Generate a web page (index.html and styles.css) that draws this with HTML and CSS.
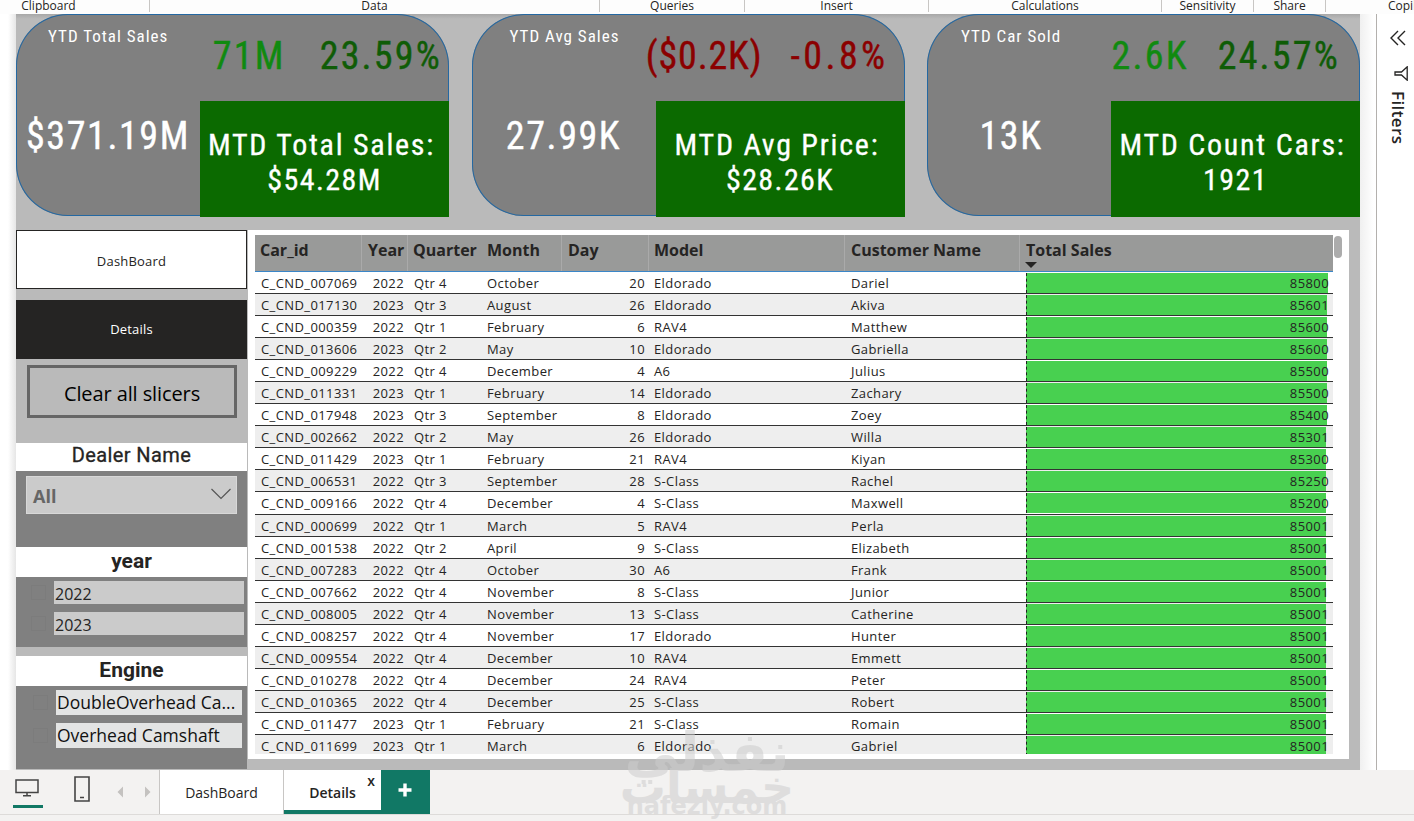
FILE: index.html
```html
<!DOCTYPE html>
<html lang="en">
<head>
    <meta charset="UTF-8">
    <meta name="viewport" content="width=device-width, initial-scale=1.0">
    <title>Car Sales Report</title>
    <link rel="stylesheet" href="styles.css">
</head>
<body>

    <header class="ribbon">
        <div class="group clipboard">Clipboard</div>
        <div class="group data">Data</div>
        <div class="group queries">Queries</div>
        <div class="group insert">Insert</div>
        <div class="group calculations">Calculations</div>
        <div class="group sensitivity">Sensitivity</div>
        <div class="group share">Share</div>
        <div class="group copilot">Copilot</div>
    </header>

    <div class="workspace">
        <main class="canvas">
            <section class="cards">
                <div class="card total">
                    <div class="card-label">YTD Total Sales</div>
                    <div class="card-change"><span class="up">71M</span><span class="up-dark">23.59%</span></div>
                    <div class="card-value">$371.19M</div>
                    <div class="card-mtd"><span class="mtd-name">MTD Total Sales:</span><span>$54.28M</span></div>
                </div>
                <div class="card average">
                    <div class="card-label">YTD Avg Sales</div>
                    <div class="card-change"><span class="down">($0.2K)</span><span class="down wide">-0.8%</span></div>
                    <div class="card-value">27.99K</div>
                    <div class="card-mtd"><span class="mtd-name">MTD Avg Price:</span><span>$28.26K</span></div>
                </div>
                <div class="card sold">
                    <div class="card-label">YTD Car Sold</div>
                    <div class="card-change"><span class="up">2.6K</span><span class="up-dark">24.57%</span></div>
                    <div class="card-value">13K</div>
                    <div class="card-mtd"><span class="mtd-name">MTD Count Cars:</span><span>1921</span></div>
                </div>
            </section>

            <div class="report">
                <aside class="sidebar">
                    <div class="nav-button">DashBoard</div>
                    <div class="nav-button active">Details</div>
                    <div class="clear-button">Clear all slicers</div>

                    <div class="slicer dealer">
                        <div class="slicer-title">Dealer Name</div>
                        <div class="dropdown">
                            <span>All</span>
                            <svg width="20" height="12" viewBox="0 0 20 12"><path d="M0.5 1 L10 10.5 L19.5 1" fill="none" stroke="#555" stroke-width="1.2"/></svg>
                        </div>
                    </div>

                    <div class="slicer year">
                        <div class="slicer-title">year</div>
                        <div class="option"><i class="check"></i><span>2022</span></div>
                        <div class="option"><i class="check"></i><span>2023</span></div>
                    </div>

                    <div class="slicer engine">
                        <div class="slicer-title">Engine</div>
                        <div class="option"><i class="check"></i><span>DoubleOverhead Ca...</span></div>
                        <div class="option"><i class="check"></i><span>Overhead Camshaft</span></div>
                    </div>
                </aside>

                <section class="table-card">
                    <div class="table">
                        <div class="row head"><div>Car_id</div><div>Year</div><div>Quarter</div><div>Month</div><div>Day</div><div>Model</div><div>Customer Name</div><div>Total Sales</div></div>
                        <div class="row"><div>C_CND_007069</div><div>2022</div><div>Qtr 4</div><div>October</div><div>20</div><div>Eldorado</div><div>Dariel</div><div><b style="width: 302px"></b>85800</div></div>
                        <div class="row"><div>C_CND_017130</div><div>2023</div><div>Qtr 3</div><div>August</div><div>26</div><div>Eldorado</div><div>Akiva</div><div><b style="width: 301px"></b>85601</div></div>
                        <div class="row"><div>C_CND_000359</div><div>2022</div><div>Qtr 1</div><div>February</div><div>6</div><div>RAV4</div><div>Matthew</div><div><b style="width: 301px"></b>85600</div></div>
                        <div class="row"><div>C_CND_013606</div><div>2023</div><div>Qtr 2</div><div>May</div><div>10</div><div>Eldorado</div><div>Gabriella</div><div><b style="width: 301px"></b>85600</div></div>
                        <div class="row"><div>C_CND_009229</div><div>2022</div><div>Qtr 4</div><div>December</div><div>4</div><div>A6</div><div>Julius</div><div><b style="width: 301px"></b>85500</div></div>
                        <div class="row"><div>C_CND_011331</div><div>2023</div><div>Qtr 1</div><div>February</div><div>14</div><div>Eldorado</div><div>Zachary</div><div><b style="width: 301px"></b>85500</div></div>
                        <div class="row"><div>C_CND_017948</div><div>2023</div><div>Qtr 3</div><div>September</div><div>8</div><div>Eldorado</div><div>Zoey</div><div><b style="width: 301px"></b>85400</div></div>
                        <div class="row"><div>C_CND_002662</div><div>2022</div><div>Qtr 2</div><div>May</div><div>26</div><div>Eldorado</div><div>Willa</div><div><b style="width: 300px"></b>85301</div></div>
                        <div class="row"><div>C_CND_011429</div><div>2023</div><div>Qtr 1</div><div>February</div><div>21</div><div>RAV4</div><div>Kiyan</div><div><b style="width: 300px"></b>85300</div></div>
                        <div class="row"><div>C_CND_006531</div><div>2022</div><div>Qtr 3</div><div>September</div><div>28</div><div>S-Class</div><div>Rachel</div><div><b style="width: 300px"></b>85250</div></div>
                        <div class="row"><div>C_CND_009166</div><div>2022</div><div>Qtr 4</div><div>December</div><div>4</div><div>S-Class</div><div>Maxwell</div><div><b style="width: 300px"></b>85200</div></div>
                        <div class="row"><div>C_CND_000699</div><div>2022</div><div>Qtr 1</div><div>March</div><div>5</div><div>RAV4</div><div>Perla</div><div><b style="width: 300px"></b>85001</div></div>
                        <div class="row"><div>C_CND_001538</div><div>2022</div><div>Qtr 2</div><div>April</div><div>9</div><div>S-Class</div><div>Elizabeth</div><div><b style="width: 300px"></b>85001</div></div>
                        <div class="row"><div>C_CND_007283</div><div>2022</div><div>Qtr 4</div><div>October</div><div>30</div><div>A6</div><div>Frank</div><div><b style="width: 300px"></b>85001</div></div>
                        <div class="row"><div>C_CND_007662</div><div>2022</div><div>Qtr 4</div><div>November</div><div>8</div><div>S-Class</div><div>Junior</div><div><b style="width: 300px"></b>85001</div></div>
                        <div class="row"><div>C_CND_008005</div><div>2022</div><div>Qtr 4</div><div>November</div><div>13</div><div>S-Class</div><div>Catherine</div><div><b style="width: 300px"></b>85001</div></div>
                        <div class="row"><div>C_CND_008257</div><div>2022</div><div>Qtr 4</div><div>November</div><div>17</div><div>Eldorado</div><div>Hunter</div><div><b style="width: 300px"></b>85001</div></div>
                        <div class="row"><div>C_CND_009554</div><div>2022</div><div>Qtr 4</div><div>December</div><div>10</div><div>RAV4</div><div>Emmett</div><div><b style="width: 300px"></b>85001</div></div>
                        <div class="row"><div>C_CND_010278</div><div>2022</div><div>Qtr 4</div><div>December</div><div>24</div><div>RAV4</div><div>Peter</div><div><b style="width: 300px"></b>85001</div></div>
                        <div class="row"><div>C_CND_010365</div><div>2022</div><div>Qtr 4</div><div>December</div><div>25</div><div>S-Class</div><div>Robert</div><div><b style="width: 300px"></b>85001</div></div>
                        <div class="row"><div>C_CND_011477</div><div>2023</div><div>Qtr 1</div><div>February</div><div>21</div><div>S-Class</div><div>Romain</div><div><b style="width: 300px"></b>85001</div></div>
                        <div class="row"><div>C_CND_011699</div><div>2023</div><div>Qtr 1</div><div>March</div><div>6</div><div>Eldorado</div><div>Gabriel</div><div><b style="width: 300px"></b>85001</div></div>
                    </div>
                    <div class="scroll-thumb"></div>
                </section>
            </div>
        </main>

        <aside class="filters">
            <svg width="16" height="16" viewBox="0 0 16 16"><path d="M8 1 L1 8 L8 15 M15 1 L8 8 L15 15" fill="none" stroke="#252423" stroke-width="1.4"/></svg>
            <svg class="funnel" width="14" height="15" viewBox="0 0 14 15"><path d="M13.2 0.8 V14.2 L7.5 9 H1 V6 H7.5 Z" fill="none" stroke="#252423" stroke-width="1.3"/></svg>
            <span class="filters-title">Filters</span>
        </aside>
    </div>

    <footer class="page-bar">
        <div class="views">
            <div class="view selected">
                <svg width="24" height="18" viewBox="0 0 24 18"><path d="M1 1 H23 V13.5 H1 Z M12 13.5 V16.5 M8 16.8 H16" fill="none" stroke="#444" stroke-width="1.5"/></svg>
            </div>
            <svg class="phone" width="16" height="26" viewBox="0 0 16 26"><path d="M1 1 H15 V25 H1 Z M6 21.5 H10" fill="none" stroke="#444" stroke-width="1.6"/></svg>
            <svg class="arrows" width="34" height="12" viewBox="0 0 34 12"><path d="M6 0.5 V11.5 L0.5 6 Z M28 0.5 V11.5 L33.5 6 Z" fill="#c4c2c0"/></svg>
        </div>
        <div class="tab">DashBoard</div>
        <div class="tab current">Details<span class="close">x</span></div>
        <div class="add">
            <svg width="14" height="14" viewBox="0 0 14 14"><path d="M7 0.5 V13.5 M0.5 7 H13.5" stroke="#fff" stroke-width="3.4"/></svg>
        </div>
    </footer>

    <div class="watermark">
        <span class="mark-top">نفذلي</span>
        <span class="mark-mid">خمسات</span>
        <span class="mark-url">nafezly.com</span>
    </div>

</body>
</html>
```
FILE: styles.css
```css
* {
    box-sizing: border-box;
}

body {
    margin: 0;
    width: 1414px;
    height: 821px;
    overflow: hidden;
    position: relative;
    background: #f3f2f1;
    color: #252423;
    font-family: "Open Sans", "Noto Sans", sans-serif;
}

svg {
    display: block;
}

.ribbon {
    display: flex;
    height: 14px;
    background: #fdfdfd;
    font-size: 12px;
    white-space: nowrap;
}

.group {
    height: 12px;
    flex: none;
    border-right: 1px solid #c8c6c4;
    text-align: center;
    line-height: 12px;
}

.clipboard { width: 150px; padding-right: 52px; }
.data { width: 450px; }
.queries { width: 145px; }
.insert { width: 184px; }
.calculations { width: 233px; }
.sensitivity { width: 92px; }
.share { width: 72px; }
.copilot { width: 150px; padding-left: 62px; text-align: left; }

.workspace {
    display: flex;
    height: 756px;
    background: linear-gradient(90deg, #fff 0, #fff 8px, #e6e6e6 16px, #f0f0f0 1360px, #fff 1374px);
}

.canvas {
    width: 1344px;
    margin-left: 16px;
    background: linear-gradient(#a8a8a8, #bababa 5px);
}

/* KPI cards */
.cards {
    display: grid;
    grid-template-columns: repeat(3, 433px);
    justify-content: space-between;
}

.card {
    display: grid;
    grid-template-columns: 184px 249px;
    grid-template-rows: 87px 115px;
    background: #808080;
    border-radius: 52px;
    box-shadow: inset 0 0 0 1px #2468a2;
    height: 202px;
    font-family: Roboto, sans-serif;
    font-stretch: 75%;
    color: #fff;
    white-space: nowrap;
}

.card-label {
    padding: 11px 0 0 32px;
    font-size: 17px;
    line-height: 22px;
    letter-spacing: 1px;
}

.card-change {
    display: flex;
    justify-content: flex-end;
    gap: 34px;
    padding: 18px 7px 0 0;
    font-size: 38px;
    line-height: 49px;
    letter-spacing: 2.2px;
    -webkit-text-stroke: 0.4px;
}

.card-value {
    text-align: center;
    font-size: 38px;
    line-height: 70px;
    letter-spacing: 1.6px;
    -webkit-text-stroke: 0.4px;
}

.card-mtd {
    display: flex;
    flex-direction: column;
    align-items: center;
    height: 116px;
    padding-top: 26px;
    background: #0b6a00;
    font-size: 30px;
    line-height: 35px;
    letter-spacing: 1.4px;
    -webkit-text-stroke: 0.3px;
}

.mtd-name {
    padding-right: 6px;
    letter-spacing: 1.75px;
}

.average .card-label { padding-left: 38px; }
.average .card-change { padding-right: 16px; gap: 28px; letter-spacing: 0.8px; }
.average .wide { letter-spacing: 3.4px; }
.sold .card-label { padding-left: 34px; }
.sold .card-change { padding-right: 20px; gap: 29px; }
.sold .card-value { padding-right: 16px; }

.up { color: #108a10; }
.up-dark { color: #0f5c06; }
.down { color: #8b0000; }

.report {
    display: flex;
    padding-top: 14px;
}

/* left column */
.sidebar {
    width: 231px;
    margin-right: 1px;
}

.nav-button {
    height: 59px;
    margin-bottom: 11px;
    border: 1px solid #252423;
    background: #fff;
    font-size: 13px;
    line-height: 60px;
    letter-spacing: 0.2px;
    text-align: center;
}

.nav-button.active {
    background: #252423;
    color: #fff;
    margin-bottom: 6px;
    line-height: 57px;
}

.clear-button {
    width: 210px;
    height: 53px;
    margin: 0 0 25px 11px;
    border: 3px solid #666;
    color: #000;
    font-size: 20px;
    line-height: 51px;
    letter-spacing: -0.1px;
    text-align: center;
}

.slicer {
    background: #808080;
}

.slicer-title {
    height: 30px;
    background: #fff;
    font-family: Roboto, sans-serif;
    font-size: 21px;
    font-weight: bold;
    line-height: 29px;
    text-align: center;
}

.dealer { height: 104px; }

.dealer .slicer-title {
    height: 28px;
    font-size: 20px;
    font-weight: 400;
    line-height: 24px;
    letter-spacing: 0.4px;
    -webkit-text-stroke: 0.3px;
}

.dropdown {
    display: flex;
    justify-content: space-between;
    align-items: center;
    width: 211px;
    height: 38px;
    margin: 5px 0 0 10px;
    padding: 0 5px 3px 6px;
    background: #cbcbcb;
    border: 1px solid #d8d8d8;
    color: #666;
    font-size: 18px;
    font-weight: bold;
}

.dropdown span { padding-top: 4px; }

.year { height: 100px; margin-bottom: 9px; }
.engine { height: 113px; }

.option {
    display: flex;
    align-items: center;
    margin: 4px 3px 8px 0;
}

.option span {
    flex: 1;
    height: 23px;
    padding-left: 1px;
    background: #cbcbcb;
    font-size: 16px;
    line-height: 26px;
    white-space: nowrap;
}

.check {
    width: 15px;
    height: 15px;
    margin: 0 8px 0 15px;
    border: 1px solid #7c7c7c;
}

.engine .option { margin: 4px 5px 8px 2px; }

.engine .option span {
    height: 25px;
    background: #e3e4e4;
    color: #111;
    font-size: 17.5px;
    line-height: 25px;
}

/* details table */
.table-card {
    display: flex;
    width: 1101px;
    height: 529px;
    padding: 5px 0 0 7px;
    background: #fff;
}

.table {
    width: 1078px;
    height: 519px;
    overflow: hidden;
}

.row {
    display: grid;
    grid-template-columns: 107px 46px 74px 80px 87px 196px 175px 313px;
    height: 22.06px;
    border-bottom: 1px solid #333;
    font-size: 13px;
    line-height: 22px;
    letter-spacing: 0.4px;
    white-space: nowrap;
}

.row div {
    padding: 0 5px;
}

.row:nth-child(odd) { background: #eee; }

.row div:nth-child(1),
.row div:nth-child(3),
.row div:nth-child(7) { padding-left: 6px; }

.row div:nth-child(2),
.row div:nth-child(5),
.row div:nth-child(8) {
    padding-right: 4px;
    text-align: right;
}

.row div:nth-child(8) {
    position: relative;
    z-index: 0;
}

/* data bar behind the value */
.row b {
    position: absolute;
    z-index: -1;
    top: 1px;
    bottom: 1px;
    left: 6px;
    background: #48d050;
    border-left: 1px dashed #222;
}

.row.head {
    height: 37px;
    background: #999a99;
    border-bottom: 1px solid #3a86c8;
    font-size: 16px;
    font-weight: bold;
    line-height: 31px;
    letter-spacing: 0;
}

.row.head div {
    text-align: left;
    border-right: 1px solid #aaa;
}

.row.head div:nth-child(1) { padding-left: 5px; }
.row.head div:nth-child(2),
.row.head div:nth-child(5),
.row.head div:nth-child(8) { padding-left: 6px; }

.row.head div:nth-child(3) { padding-left: 5px; }

.row.head div:nth-child(3),
.row.head div:nth-child(8) { border-right: none; }

.row.head div:nth-child(8)::after {
    content: "";
    position: absolute;
    left: 5px;
    bottom: 3px;
    border: 6px solid transparent;
    border-top-color: #252423;
    border-bottom: none;
}

.scroll-thumb {
    width: 8px;
    height: 22px;
    margin: 1px 0 0 1px;
    border-radius: 4px;
    background: #acacac;
}

/* collapsed filter pane */
.filters {
    display: flex;
    flex-direction: column;
    align-items: center;
    width: 38px;
    margin-left: 16px;
    padding-top: 16px;
    padding-left: 5px;
    border-left: 1px solid #b3b0ad;
    background: #fff;
}

.funnel { margin: 20px 0 10px 5px; }

.filters-title {
    writing-mode: vertical-rl;
    font-size: 17px;
    font-weight: 600;
    line-height: 20px;
    letter-spacing: 0.4px;
}

/* page tabs */
.page-bar {
    display: flex;
    height: 45px;
    border-bottom: 1px solid #dddbd9;
}

.views {
    display: flex;
    width: 160px;
    padding-left: 13px;
    border-right: 1px solid #c8c6c4;
}

.view.selected {
    width: 30px;
    height: 38px;
    padding: 9px 0 0 2px;
    border-bottom: 3px solid #117865;
}

.phone { margin: 6px 0 0 31px; }
.arrows { margin: 16px 0 0 27px; flex: none; }

.tab {
    width: 124px;
    background: #fff;
    border-right: 1px solid #c8c6c4;
    font-size: 14px;
    line-height: 45px;
    text-align: center;
}

.tab.current {
    position: relative;
    width: 97px;
    border-right: none;
    border-bottom: 4px solid #117865;
    font-weight: 600;
}

.close {
    position: absolute;
    top: 2px;
    right: 6px;
    font-size: 14px;
    line-height: 18px;
}

.add {
    display: flex;
    align-items: center;
    justify-content: center;
    width: 49px;
    padding: 0 1px 4px 0;
    background: #117865;
}

.watermark {
    position: absolute;
    left: 612px;
    top: 732px;
    width: 190px;
    height: 89px;
    display: flex;
    flex-direction: column;
    align-items: center;
    color: #cdcdcd;
    opacity: 0.55;
    font-family: "DejaVu Sans", sans-serif;
    font-weight: bold;
    white-space: nowrap;
}

.mark-top { font-size: 54px; line-height: 42px; }
.mark-mid { font-size: 46px; line-height: 26px; }
.mark-url { font-size: 24px; line-height: 12px; }
```
